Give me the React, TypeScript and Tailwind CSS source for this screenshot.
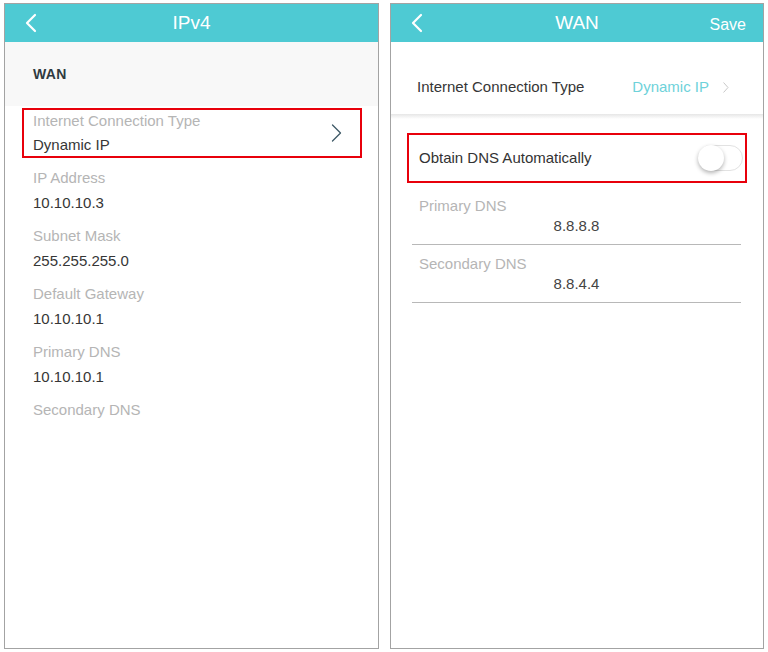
import React from 'react';

const font = { fontFamily: '"Liberation Sans", Arial, sans-serif' };

const BackIcon = () => (
  <svg width="14" height="20" viewBox="0 0 14 20" fill="none">
    <path d="M11 2 L3 10 L11 18" stroke="white" strokeWidth="2.2" strokeLinecap="round" strokeLinejoin="round" />
  </svg>
);

const Header: React.FC<{ title: string; right?: string }> = ({ title, right }) => (
  <div className="relative h-[38px] bg-[#4ecad3] flex items-center justify-center shrink-0">
    <div className="absolute left-[19px] top-[9px]">
      <BackIcon />
    </div>
    <span className="text-[19px] text-white">{title}</span>
    {right && <span className="absolute right-[17px] top-[9px] text-[16px] text-white">{right}</span>}
  </div>
);

const Field: React.FC<{ label: string; value?: string }> = ({ label, value }) => (
  <div className="pt-[9px] pb-[2px] h-[58px] pl-[11px]">
    <div className="h-[22px] leading-[22px] text-[15px] text-[#b5b5b5]">{label}</div>
    {value && <div className="mt-[3px] h-[22px] leading-[22px] text-[15px] text-[#363636]">{value}</div>}
  </div>
);

const DnsField: React.FC<{ label: string; value: string; first?: boolean }> = ({ label, value, first }) => (
  <div className={`${first ? 'pt-[13px]' : 'pt-[9px]'} pb-[8px] ml-[21px] mr-[22px] border-b border-[#b8b8b8]`}>
    <div className="pl-[7px] h-[20px] leading-[20px] text-[15px] text-[#b5b5b5]">{label}</div>
    <div className="h-[20px] leading-[20px] text-[15px] text-[#444] text-center">{value}</div>
  </div>
);

export default function App() {
  return (
    <div className="w-[768px] h-[652px] bg-white flex pt-[3px] pl-[4px] gap-[11px]" style={font}>
      {/* Left: IPv4 */}
      <div className="w-[375px] h-[646px] border border-[#a3a3a3] flex flex-col">
        <Header title="IPv4" />
        <div className="h-[64px] bg-[#f8f8f8] flex items-center pl-[28px]">
          <span className="text-[14px] font-bold text-[#2f3a40] tracking-[0.3px]">WAN</span>
        </div>
        <div className="pl-[17px] pr-[16px]">
          <div className="mt-[2px] h-[50px] border-2 border-[#e8000b] pl-[9px] pr-[18px] flex items-center justify-between">
            <div>
              <div className="h-[22px] leading-[22px] text-[15px] text-[#b5b5b5]">Internet Connection Type</div>
              <div className="mt-[2px] h-[22px] leading-[22px] text-[15px] text-[#363636]">Dynamic IP</div>
            </div>
            <svg width="11" height="18" viewBox="0 0 11 18" fill="none">
              <path d="M1.5 1 L9.5 9 L1.5 17" stroke="#3d5866" strokeWidth="1.3" strokeLinecap="round" strokeLinejoin="round" />
            </svg>
          </div>
          <Field label="IP Address" value="10.10.10.3" />
          <Field label="Subnet Mask" value="255.255.255.0" />
          <Field label="Default Gateway" value="10.10.10.1" />
          <Field label="Primary DNS" value="10.10.10.1" />
          <Field label="Secondary DNS" />
        </div>
      </div>

      {/* Right: WAN */}
      <div className="w-[374px] h-[646px] border border-[#a3a3a3] flex flex-col">
        <Header title="WAN" right="Save" />
        <div className="h-[72px] pt-[18px] flex items-center justify-between pl-[26px] pr-[34px]">
          <span className="text-[15px] text-[#363636]">Internet Connection Type</span>
          <div className="flex items-center gap-[14px]">
            <span className="text-[15px] text-[#6ed2da]">Dynamic IP</span>
            <svg width="6" height="11" viewBox="0 0 6 11" fill="none">
              <path d="M0.8 0.8 L5 5.5 L0.8 10.2" stroke="#c8c8c8" strokeWidth="1" strokeLinecap="round" strokeLinejoin="round" />
            </svg>
          </div>
        </div>
        <div className="h-[5px] bg-gradient-to-b from-[#e6e6e6] to-white" />
        <div className="mt-[14px] ml-[16px] mr-[16px] h-[50px] border-2 border-[#e8000b] pl-[10px] pr-[2px] flex items-center justify-between">
          <span className="text-[15px] font-medium text-[#333]">Obtain DNS Automatically</span>
          <div className="w-[45px] h-[26px] rounded-full border border-[#e2e2e2] bg-white relative">
            <div className="absolute left-[-1px] top-[-1px] w-[26px] h-[26px] rounded-full bg-white shadow-[0_2px_4px_rgba(0,0,0,0.3)]" />
          </div>
        </div>
        <DnsField label="Primary DNS" value="8.8.8.8" first />
        <DnsField label="Secondary DNS" value="8.8.4.4" />
      </div>
    </div>
  );
}
